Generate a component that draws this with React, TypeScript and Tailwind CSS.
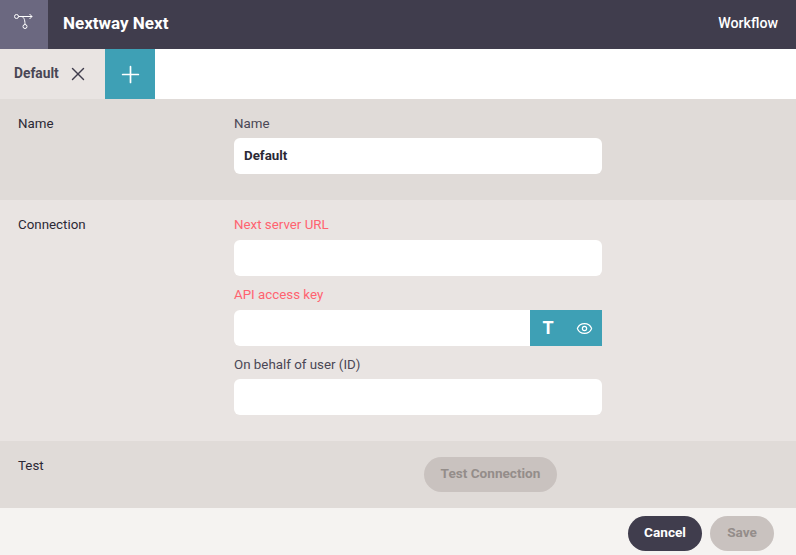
import { Eye, Plus, X } from "lucide-react";

function Field({ label, value, error, mt, gap = "mt-2", children }: { label: string; value?: string; error?: boolean; mt?: string; gap?: string; children?: React.ReactNode }) {
  return (
    <div className={mt}>
      <div className={`h-4 text-[13.33px] leading-4 ${error ? "text-[#ff6370]" : "text-[#4a4755]"}`}>{label}</div>
      <div className={`${gap} flex h-9 w-[368px] overflow-hidden bg-white ${children ? "rounded-l-md" : "rounded-md"}`}>
        <div className="flex flex-1 items-center px-2.5 pb-px text-[13.33px] font-bold text-[#2b2935]">{value}</div>
        {children}
      </div>
    </div>
  );
}

export default function App() {
  return (
    <div className="flex h-[555px] w-[796px] flex-col overflow-hidden bg-[#f5f3f1] font-['Roboto',sans-serif] text-[13.33px] text-[#2b2935]">
      <header className="flex h-[49px] items-center bg-[#403d4d] text-white">
        <div className="flex h-full w-12 items-center justify-center bg-[#6b6880]">
          <svg width="20" height="18" viewBox="0 0 20 18" fill="none" stroke="#fff" strokeWidth="1" className="-mt-1.5">
            <circle cx="2.5" cy="3.5" r="2" />
            <circle cx="11" cy="13.5" r="2" />
            <path d="M4.5 3.5H18M15.5 1l2.5 2.5L15.5 6M7 3.5c2.5 0 4 2.5 4 8" />
          </svg>
        </div>
        <div className="ml-[15px] pb-0.5 text-[17px] font-bold">Nextway Next</div>
        <div className="ml-auto mr-[18px] pb-0.5 text-[14.2px] font-medium">Workflow</div>
      </header>

      <div className="flex h-[50px] bg-white">
        <div className="flex w-[105px] items-center bg-[#e9e4e2] pl-3.5">
          <span className="pb-px text-[13.8px] font-bold text-[#4a4755]">Default</span>
          <X size={22} strokeWidth={1.6} className="ml-[8px] text-[#403d4d]" />
        </div>
        <div className="flex w-[50px] items-center justify-center bg-[#3ea0b5] text-white">
          <Plus size={27} strokeWidth={1.5} />
        </div>
      </div>

      <section className="flex h-[101px] bg-[#e0dbd8] pl-[18px] pt-[17px]">
        <div className="h-4 w-[216px] leading-4">Name</div>
        <Field label="Name" value="Default" gap="mt-1.5" />
      </section>

      <section className="flex h-[241px] bg-[#e9e4e2] pl-[18px] pt-[17px]">
        <div className="h-4 w-[216px] leading-4">Connection</div>
        <div>
          <Field label="Next server URL" error gap="mt-[7px]" />
          <Field label="API access key" error mt="mt-[11px]" gap="mt-[7px]">
            <div className="flex w-[72px] items-center bg-[#3ea0b5] text-white">
              <span className="w-9 text-center text-lg font-bold leading-none">T</span>
              <span className="flex w-9 justify-center">
                <Eye size={17} strokeWidth={1.7} />
              </span>
            </div>
          </Field>
          <Field label="On behalf of user (ID)" mt="mt-[11px]" gap="mt-1.5" />
        </div>
      </section>

      <section className="flex h-[67px] bg-[#e0dbd8] pl-[18px] pt-4">
        <div className="mt-px h-4 w-[406px] leading-4">Test</div>
        <button className="flex h-[35px] w-[133px] items-center justify-center rounded-full bg-[#c9c2bf] pb-0.5 text-[13.6px] font-bold text-[#948d8a]">
          Test Connection
        </button>
      </section>

      <footer className="flex flex-1 items-start justify-end gap-2 pr-[22px] pt-2">
        <button className="h-[35px] w-[74px] rounded-full bg-[#403d4d] pb-0.5 text-[13.6px] font-bold text-white">Cancel</button>
        <button className="h-[35px] w-16 rounded-full bg-[#c9c2bf] pb-0.5 text-[13.6px] font-bold text-[#948d8a]">Save</button>
      </footer>
    </div>
  );
}
